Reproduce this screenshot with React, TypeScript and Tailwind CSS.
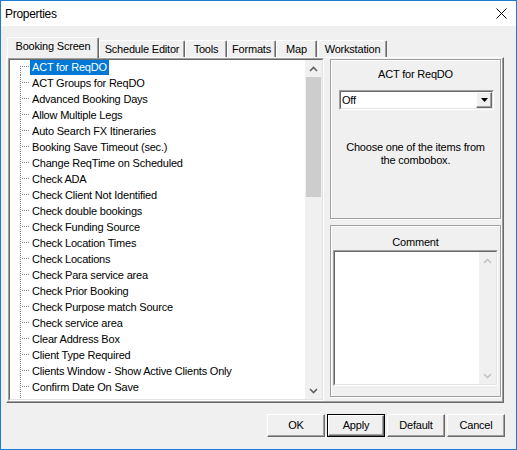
import React from "react";

const items = [
  "ACT for ReqDO",
  "ACT Groups for ReqDO",
  "Advanced Booking Days",
  "Allow Multiple Legs",
  "Auto Search FX Itineraries",
  "Booking Save Timeout (sec.)",
  "Change ReqTime on Scheduled",
  "Check ADA",
  "Check Client Not Identified",
  "Check double bookings",
  "Check Funding Source",
  "Check Location Times",
  "Check Locations",
  "Check Para service area",
  "Check Prior Booking",
  "Check Purpose match Source",
  "Check service area",
  "Clear Address Box",
  "Client Type Required",
  "Clients Window - Show Active Clients Only",
  "Confirm Date On Save",
  "",
];

const tabs = [
  { label: "Schedule Editor", w: "w-[86px]", ml: "" },
  { label: "Tools", w: "w-[42px]", ml: "" },
  { label: "Formats", w: "w-[49px]", ml: "" },
  { label: "Map", w: "w-[41px]", ml: "" },
  { label: "Workstation", w: "w-[69px]", ml: "ml-[1px]" },
];

function Chevron({ up, color }: { up: boolean; color: string }) {
  return (
    <svg width="9" height="6" viewBox="0 0 9 6">
      <path
        d={up ? "M1 5 L4.5 1.5 L8 5" : "M1 1 L4.5 4.5 L8 1"}
        fill="none"
        stroke={color}
        strokeWidth="1.6"
      />
    </svg>
  );
}

function Connector({ first }: { first: boolean }) {
  return (
    <svg width="10" height="16" viewBox="0 0 10 16" className="shrink-0">
      <line
        x1="0.5"
        y1={first ? 7 : 0}
        x2="0.5"
        y2="16"
        stroke="#808080"
        strokeDasharray="1 1"
      />
      <line x1="2" y1="7.5" x2="10" y2="7.5" stroke="#808080" strokeDasharray="1 1" />
    </svg>
  );
}

function Sunken({ className, children }: { className: string; children: React.ReactNode }) {
  return (
    <div className={`border border-t-[#a0a0a0] border-l-[#a0a0a0] border-b-white border-r-white ${className}`}>
      <div className="h-full w-full border border-t-[#696969] border-l-[#696969] border-b-[#e3e3e3] border-r-[#e3e3e3] flex">
        {children}
      </div>
    </div>
  );
}

function Button({ label, isDefault }: { label: string; isDefault?: boolean }) {
  const face = (
    <div className="h-full w-full bg-[#f0f0f0] border border-t-white border-l-white border-b-[#696969] border-r-[#696969] shadow-[inset_-1px_-1px_0_#a0a0a0] flex items-center justify-center">
      {label}
    </div>
  );
  return isDefault ? (
    <div className="w-[58px] h-[23px] border border-black">{face}</div>
  ) : (
    <div className="w-[58px] h-[23px]">{face}</div>
  );
}

export default function App() {
  return (
    <div className="w-[517px] h-[450px] border border-[#1a7fd4] bg-[#f0f0f0] flex flex-col overflow-hidden font-['Liberation_Sans',Arial,sans-serif] text-[11px] tracking-[-0.2px] text-black leading-[13px]">
      {/* title bar */}
      <div className="h-[25px] shrink-0 bg-white flex items-center pl-[4px] pr-[9px]">
        <span className="flex-1 text-[12px] tracking-[-0.3px] leading-[16px]">Properties</span>
        <svg width="11" height="11" viewBox="0 0 11 11">
          <path d="M0.5 0.5 L10.5 10.5 M10.5 0.5 L0.5 10.5" stroke="#000" strokeWidth="1" />
        </svg>
      </div>

      <div className="flex flex-col pl-[5px] pt-[11px]">
        {/* tab strip */}
        <div className="flex items-end h-[20px] pl-[1px]">
          <div className="relative z-10 -mb-px w-[92px] h-[21px] bg-[#f0f0f0] border-l border-t border-l-white border-t-white border-r border-r-[#696969] shadow-[inset_-1px_0_0_#a0a0a0] rounded-t-[2px] flex items-center justify-center pb-[3px]">
            Booking Screen
          </div>
          {tabs.map((t) => (
            <div
              key={t.label}
              className={`${t.w} ${t.ml} h-[17px] bg-[#f0f0f0] border-l border-t border-l-white border-t-white border-r border-r-[#696969] shadow-[inset_-1px_0_0_#a0a0a0] rounded-t-[2px] flex items-center justify-center`}
            >
              {t.label}
            </div>
          ))}
        </div>

        {/* tab page */}
        <div className="w-[498px] h-[346px] border-l border-t border-l-white border-t-white border-r border-b border-r-[#696969] border-b-[#696969]">
          <div className="h-full w-full border-r border-b border-r-[#a0a0a0] border-b-[#a0a0a0] flex">
            {/* option tree */}
            <Sunken className="ml-[1px] w-[316px] h-full">
              <div className="flex-1 bg-white overflow-hidden flex flex-col">
                <div className="-mt-px flex flex-col">
                  {items.map((label, i) => (
                    <div key={i} className="h-[16px] shrink-0 flex items-center pl-[10px]">
                      <Connector first={i === 0} />
                      {label && (
                        <span
                          className={`px-[2px] h-[16px] flex items-center whitespace-nowrap ${
                            i === 0 ? "bg-[#0078d7] text-white" : ""
                          }`}
                        >
                          {label}
                        </span>
                      )}
                    </div>
                  ))}
                </div>
              </div>
              <div className="w-[17px] bg-[#f0f0f0] flex flex-col">
                <div className="h-[17px] flex items-center justify-center">
                  <Chevron up color="#606060" />
                </div>
                <div className="flex-1">
                  <div className="mx-[1px] h-[120px] bg-[#cdcdcd]" />
                </div>
                <div className="h-[17px] flex items-center justify-center">
                  <Chevron up={false} color="#606060" />
                </div>
              </div>
            </Sunken>

            {/* value editor */}
            <div className="ml-[6px] w-[171px] pt-[1px] flex flex-col">
              <div className="h-[160px] border border-[#a0a0a0] shadow-[1px_1px_0_#fff,inset_1px_1px_0_#fff] flex flex-col">
                <div className="pt-[8px] text-center">ACT for ReqDO</div>
                <Sunken className="mt-[9px] ml-[8px] w-[155px] h-[20px]">
                  <div className="flex-1 bg-white flex items-center pl-[1px]">Off</div>
                  <div className="w-[16px] bg-[#f0f0f0] border border-t-white border-l-white border-b-[#696969] border-r-[#696969] shadow-[inset_-1px_-1px_0_#a0a0a0] flex items-center justify-center">
                    <svg width="7" height="4" viewBox="0 0 7 4">
                      <polygon points="0,0 7,0 3.5,4" fill="#000" />
                    </svg>
                  </div>
                </Sunken>
                <div className="mt-[31px] text-center">
                  Choose one of the items from
                  <br />
                  the combobox.
                </div>
              </div>

              <div className="mt-[6px] h-[172px] border border-[#a0a0a0] shadow-[1px_1px_0_#fff,inset_1px_1px_0_#fff] flex flex-col">
                <div className="pt-[10px] text-center">Comment</div>
                <Sunken className="mt-[1px] ml-[2px] w-[165px] h-[136px]">
                  <div className="flex-1 bg-white" />
                  <div className="w-[17px] bg-[#f0f0f0] flex flex-col justify-between">
                    <div className="h-[17px] flex items-center justify-center">
                      <Chevron up color="#c4c4c4" />
                    </div>
                    <div className="h-[17px] flex items-center justify-center">
                      <Chevron up={false} color="#c4c4c4" />
                    </div>
                  </div>
                </Sunken>
              </div>
            </div>
          </div>
        </div>

        {/* dialog buttons */}
        <div className="w-[499px] mt-[11px] flex justify-end gap-[2px]">
          <Button label="OK" />
          <Button label="Apply" isDefault />
          <Button label="Default" />
          <Button label="Cancel" />
        </div>
      </div>
    </div>
  );
}
